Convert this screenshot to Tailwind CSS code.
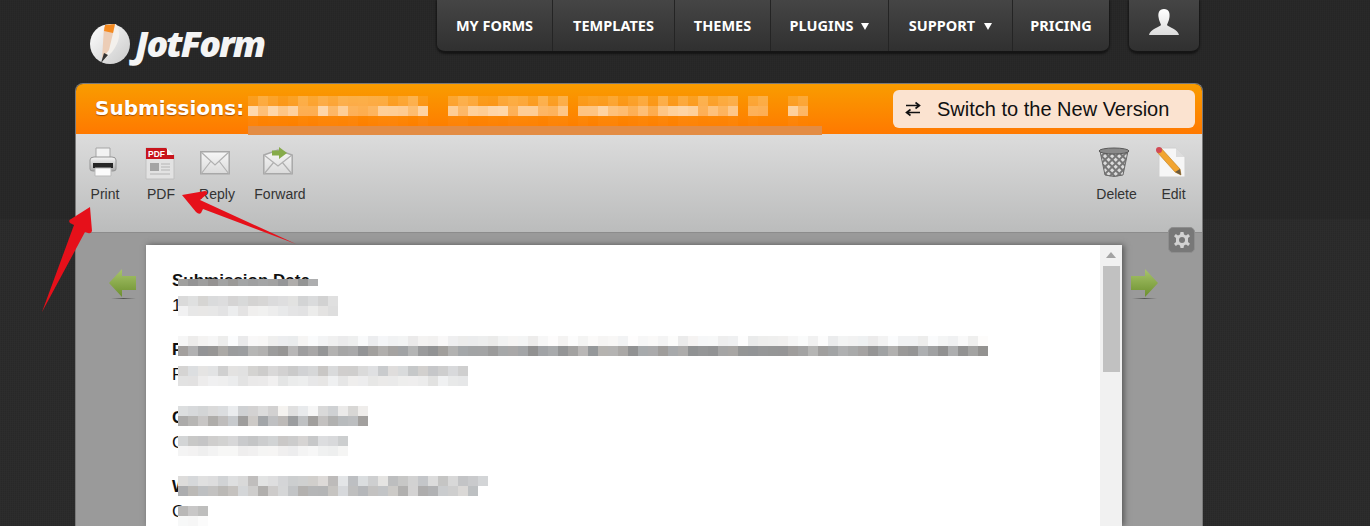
<!DOCTYPE html>
<html lang="en">
<head>
    <meta charset="UTF-8">
    <meta name="viewport" content="width=device-width, initial-scale=1.0">
    <title>JotForm Submissions</title>
    <script src="https://cdn.jsdelivr.net/npm/@tailwindcss/browser@4"></script>
</head>
<body class="relative h-[526px] w-[1370px] overflow-hidden bg-[image:repeating-linear-gradient(90deg,rgba(255,255,255,.012)_0_1px,transparent_1px_2px),repeating-linear-gradient(0deg,rgba(0,0,0,.06)_0_1px,transparent_1px_2px),linear-gradient(#272727_219px,#2b2b2b_219px)] font-['Liberation_Sans',Arial,sans-serif]">

    <!-- Top bar -->
    <header class="flex h-[83px] items-start">
        <div class="ml-[90px] mt-[24px] flex w-[347px] items-center">
            <svg class="h-[40px] w-[40px] shrink-0" viewBox="0 0 40 40">
                <defs>
                    <linearGradient id="ball" x1="0" y1="0" x2="1" y2="1"><stop offset="0" stop-color="#fff"/><stop offset="1" stop-color="#c9c9c9"/></linearGradient>
                </defs>
                <circle cx="20" cy="20" r="20" fill="url(#ball)"/>
                <path d="M14 2 L26 0 Q34 12 22 28 L13 37 Z" fill="#f3f0ec"/>
                <path d="M14 3 L25 1 L19 26 L12 35 Z" fill="#eccdb6"/>
                <path d="M15 1 L25 0 L23 9 L14 7 Z" fill="#f58a1f"/>
                <path d="M14 29 L18 31 L11 39 Z" fill="#333"/>
            </svg>
            <span class="ml-[5px] font-['Open_Sans',sans-serif] text-[36px] font-extrabold italic leading-none tracking-[-2px] text-[#f4f4f4]">JotForm</span>
        </div>
        <nav class="flex h-[53px] w-[672px] rounded-b-[8px] border-b-2 border-[#151515] bg-[linear-gradient(#454545,#303030)] font-['Noto_Sans',sans-serif] text-[14.500px] font-bold text-white shadow-[0_0_3px_#000]">
            <a class="flex w-[116px] items-center justify-center border-r border-[#242424]">MY FORMS</a>
            <a class="flex w-[122px] items-center justify-center border-r border-[#242424]">TEMPLATES</a>
            <a class="flex w-[96px] items-center justify-center border-r border-[#242424]">THEMES</a>
            <a class="flex w-[118px] items-center justify-center gap-[8px] border-r border-[#242424]">PLUGINS <span class="mt-[2px] h-0 w-0 border-x-[4px] border-t-[7px] border-x-transparent border-t-white"></span></a>
            <a class="flex w-[124px] items-center justify-center gap-[9px] border-r border-[#242424]">SUPPORT <span class="mt-[2px] h-0 w-0 border-x-[4px] border-t-[7px] border-x-transparent border-t-white"></span></a>
            <a class="flex flex-1 items-center justify-center">PRICING</a>
        </nav>
        <div class="ml-[20px] flex h-[53px] w-[70px] items-start justify-center rounded-b-[8px] border-b-2 border-[#151515] bg-[linear-gradient(#454545,#303030)] pt-[8px] shadow-[0_0_3px_#000]">
            <svg class="h-[28px] w-[32px]" viewBox="0 0 32 28">
                <defs>
                    <linearGradient id="usr" x1="0" y1="0" x2="0" y2="1"><stop offset="0" stop-color="#fff"/><stop offset="1" stop-color="#dcdcdc"/></linearGradient>
                </defs>
                <path d="M16 1 C11 1 10 5 10.500 9 C11 13 12.500 15 13 17 C12 19 2 21 1 27 L31 27 C30 21 20 19 19 17 C19.500 15 21 13 21.500 9 C22 5 21 1 16 1 Z" fill="url(#usr)"/>
            </svg>
        </div>
    </header>

    <!-- Submission panel -->
    <main class="ml-[75px] flex h-[443px] w-[1128px] flex-col rounded-t-[8px] border-x border-t border-[#7a7a7a]">
        <div class="relative flex h-[50px] shrink-0 items-center justify-between rounded-t-[7px] bg-[linear-gradient(#f99c00,#ff7900)] pl-[19px] pr-[7px]">
            <h1 class="mt-[-2px] font-['DejaVu_Sans',Verdana,sans-serif] text-[20px] font-bold text-white [text-shadow:0_1px_1px_#a85000]">Submissions:</h1>
            <button class="flex h-[38px] w-[302px] items-center rounded-[6px] bg-[#fbe3d0] pl-[12px] text-[20px] text-[#111]">
                <svg class="mr-[16px] h-[16px] w-[16px]" viewBox="0 0 16 16" fill="none" stroke="#111" stroke-width="1.600">
                    <path d="M1 4.500 H14 M10.500 1.500 L14.500 4.500 L10.500 7.500"/>
                    <path d="M15 11.500 H2 M5.500 8.500 L1.500 11.500 L5.500 14.500"/>
                </svg>
                Switch to the New Version
            </button>
            <div id="titleBlur" class="absolute left-[172px] top-[12px]"></div>
            <div class="absolute bottom-[-1px] left-[172px] h-[9px] w-[574px] bg-[#e38c44]"></div>
        </div>

        <!-- Toolbar -->
        <div class="flex h-[99px] shrink-0 justify-between border-b border-[#8c8c8c] bg-[linear-gradient(#dcdcdc,#bbbcbc)] pt-[13px] text-[14px] text-[#333]">
            <div class="flex pl-[1px]">
                <div class="flex w-[56px] flex-col items-center">
                    <svg class="mr-[5px] h-[30px] w-[30px]" viewBox="0 0 30 30">
                        <defs>
                            <linearGradient id="prn" x1="0" y1="0" x2="0" y2="1"><stop offset="0" stop-color="#f6f6f6"/><stop offset="1" stop-color="#a9a9a9"/></linearGradient>
                            <linearGradient id="env" x1="0" y1="0" x2="0" y2="1"><stop offset="0" stop-color="#f7f7f7"/><stop offset="1" stop-color="#dadada"/></linearGradient>
                        </defs>
                        <path d="M8 1 H22 V11 H8 Z" fill="#f2f2f2" stroke="#a5a5a5"/>
                        <path d="M2 13 Q2 10 6 10 H24 Q28 10 28 13 V22 Q28 24 25 24 H5 Q2 24 2 22 Z" fill="url(#prn)" stroke="#959595"/>
                        <path d="M5 16 H25 V21 H5 Z" fill="#262626"/>
                        <path d="M7 21 H23 V29 H7 Z" fill="#fbfbfb" stroke="#bbb"/>
                    </svg>
                    <span class="mt-[7px]">Print</span>
                </div>
                <div class="flex w-[56px] flex-col items-center">
                    <svg class="mr-[3px] h-[30px] w-[30px] overflow-visible" viewBox="0 0 30 30">
                        <path d="M1 1 H22 L29 8 V32 H1 Z" fill="#e2e2e2" stroke="#c0c0c0"/>
                        <path d="M1 1 H21 L26 6 L29 8 V12 H1 Z" fill="#c8141c"/>
                        <path d="M22 1 L29 8 H22 Z" fill="#f2f2f2"/>
                        <text x="3" y="10" font-size="8.500" font-weight="700" fill="#fff" font-family="Liberation Sans">PDF</text>
                        <rect x="5" y="16" width="9" height="8" fill="#a4a4a4"/>
                        <path d="M16 17 H25 M16 20 H25 M16 23 H25 M5 27 H25" stroke="#b4b4b4"/>
                    </svg>
                    <span class="mt-[7px]">PDF</span>
                </div>
                <div class="flex w-[56px] flex-col items-center">
                    <svg class="mr-[4px] h-[30px] w-[30px]" viewBox="0 0 30 30">
                        <path d="M.8 4.800 H29.200 V26.800 H.8 Z" fill="url(#env)" stroke="#a8a8a8" stroke-width="1.500"/>
                        <path d="M1 5 L15 18 L29 5 M1 27 L11 14 M29 27 L19 14" fill="none" stroke="#b0b0b0" stroke-width="1.200"/>
                    </svg>
                    <span class="mt-[7px]">Reply</span>
                </div>
                <div class="flex w-[70px] flex-col items-center">
                    <svg class="mr-[4px] h-[30px] w-[30px]" viewBox="0 0 30 30">
                        <path d="M.8 8 L15 3 L29.200 8 V26.800 H.8 Z" fill="url(#env)" stroke="#a8a8a8" stroke-width="1.500"/>
                        <path d="M1 8 L15 19 L29 8 M1 27 L11 15 M29 27 L19 15" fill="none" stroke="#b0b0b0" stroke-width="1.200"/>
                        <path d="M9 3.500 H16 V0 L24 6 L16 12 V8.500 H9 Z" fill="#86ab4a"/>
                    </svg>
                    <span class="mt-[7px]">Forward</span>
                </div>
            </div>
            <div class="flex">
                <div class="flex w-[57px] flex-col items-center">
                    <svg class="mr-[5px] h-[30px] w-[32px]" viewBox="0 0 32 30">
                        <defs>
                            <pattern id="mesh" width="5" height="5" patternUnits="userSpaceOnUse" patternTransform="rotate(45)"><rect width="5" height="5" fill="#777"/><rect width="3" height="3" fill="#dcdcdc"/></pattern>
                        </defs>
                        <path d="M2 4 L7 28 Q16 31 25 28 L30 4 Z" fill="url(#mesh)" stroke="#6a6a6a"/>
                        <ellipse cx="16" cy="4" rx="15" ry="3" fill="#8a8a8a" stroke="#5a5a5a"/>
                    </svg>
                    <span class="mt-[7px]">Delete</span>
                </div>
                <div class="flex w-[57px] flex-col items-center">
                    <svg class="mr-[6px] h-[30px] w-[30px]" viewBox="0 0 30 30">
                        <path d="M3 1 H20 L29 10 V30 H3 Z" fill="#f6f6f6" stroke="#cfcfcf"/>
                        <path d="M20 1 L29 10 H20 Z" fill="#dcdcdc"/>
                        <path d="M1 5 L5 1 L24 22 L25 28 L19 25 Z" fill="#f2a531" stroke="#b87a1c" stroke-width=".6"/>
                        <circle cx="3" cy="3" r="3" fill="#d24a55"/>
                        <path d="M19 25 L25 28 L24 22 Z" fill="#6b5a3e"/>
                    </svg>
                    <span class="mt-[7px]">Edit</span>
                </div>
            </div>
        </div>

        <!-- Submission view -->
        <div class="relative flex min-h-0 flex-1 items-start bg-[#9a9a9a] pt-[12px]">
            <div class="flex w-[70px] justify-end pr-[9px] pt-[23px]">
                <svg class="h-[31px] w-[29px]" viewBox="0 0 29 31">
                    <defs>
                        <linearGradient id="grn" x1="0" y1="0" x2="0" y2="1"><stop offset="0" stop-color="#a8c56b"/><stop offset="1" stop-color="#6c8f2e"/></linearGradient>
                        <linearGradient id="shade"><stop offset="0" stop-color="#555" stop-opacity="0"/><stop offset=".5" stop-color="#555"/><stop offset="1" stop-color="#555" stop-opacity="0"/></linearGradient>
                    </defs>
                    <path d="M1 15 L14 1 V8 H28 V22 H14 V29 Z" fill="url(#grn)"/>
                    <rect x="3" y="30" width="25" height="1" fill="url(#shade)"/>
                </svg>
            </div>
            <section class="relative flex h-[281px] w-[976px] overflow-hidden bg-white text-[17px] text-[#111] shadow-[2px_0_6px_#555]">
                <div class="flex-1 pl-[26px] pt-[23px] leading-[25px]">
                    <div class="mb-[18.500px]"><b>Submission Date</b><br>1</div>
                    <div class="mb-[18.500px]"><b>P</b><br>P</div>
                    <div class="mb-[18.500px]"><b>C</b><br>C</div>
                    <div><b>W</b><br>C</div>
                </div>
                <div id="fieldBlur"></div>
                <div class="flex w-[22px] flex-col items-center bg-[#f1f1f1]">
                    <span class="mt-[7px] h-0 w-0 border-x-[5px] border-b-[6px] border-x-transparent border-b-[#a3a3a3]"></span>
                    <span class="mt-[8px] h-[106px] w-[17px] bg-[#c1c1c1]"></span>
                </div>
            </section>
            <div class="pl-[8px] pt-[23px]">
                <svg class="h-[31px] w-[29px]" viewBox="0 0 29 31">
                    <path d="M28 15 L15 1 V8 H1 V22 H15 V29 Z" fill="url(#grn)"/>
                    <rect x="2" y="30" width="25" height="1" fill="url(#shade)"/>
                </svg>
            </div>
            <div class="absolute right-[7px] top-[-6px] flex h-[26px] w-[27px] items-center justify-center rounded-[5px] border border-[#8e8e8e] bg-[#787878]">
                <svg class="h-[18px] w-[18px]" viewBox="0 0 18 18">
                    <path d="M7.500 1 H10.500 L11 3.500 L13 4.400 L15.200 3 L17 5.300 L15 7 V11 L17 12.700 L15.200 15 L13 13.600 L11 14.500 L10.500 17 H7.500 L7 14.500 L5 13.600 L2.800 15 L1 12.700 L3 11 V7 L1 5.300 L2.800 3 L5 4.400 L7 3.500 Z" fill="#d2d2d2"/>
                    <circle cx="9" cy="9" r="3" fill="#787878"/>
                </svg>
            </div>
        </div>
    </main>

    <!-- Hand drawn annotation arrows -->
    <svg class="absolute left-0 top-0 h-[526px] w-[1370px]" viewBox="0 0 1370 526">
        <path d="M42 312 L74 225 L70 223 Q68 220 71 219 L90 207 L92 231 Q91 234 88 233 L85 232 Z" fill="#e6101a"/>
        <path d="M296 244 L200 200 L207 194 Q208 191 205 191 L182 195 L196 212 Q199 215 201 213 L203 209 Z" fill="#e6101a"/>
    </svg>

    <script>
        // blurred out bits of the page, drawn as 10px mosaics
        let seed = 7;
        function rnd() {
            seed = (seed * 9301 + 49297) % 233280;
            return seed / 233280;
        }

        function mosaic(parent, left, top, rows) {
            const box = document.createElement('div');
            box.className = 'absolute';
            box.style.left = left + 'px';
            box.style.top = top + 'px';
            rows.forEach(row => {
                const line = document.createElement('div');
                line.className = 'flex';
                line.style.height = (row.h || 10) + 'px';
                for (let i = 0; i < row.cols; i++) {
                    const cell = document.createElement('div');
                    cell.className = 'w-[10px] shrink-0';
                    const v = row.g + (rnd() - 0.5) * row.spread;
                    const tint = (row.spread / 8) * (rnd() - 0.5);
                    cell.style.background = `rgb(${Math.min(255, Math.round(v + tint))},${Math.min(255, Math.round(v))},${Math.min(255, Math.round(v - tint))})`;
                    line.appendChild(cell);
                }
                box.appendChild(line);
            });
            parent.appendChild(box);
        }

        // card starts at 146,245
        const card = document.getElementById('fieldBlur');
        const x0 = 178 - 146;
        mosaic(card, x0, 279 - 245, [{ cols: 14, g: 160, spread: 30, h: 7 }]);
        mosaic(card, x0, 296 - 245, [{ cols: 16, g: 220, spread: 22 }, { cols: 16, g: 232, spread: 20 }]);
        mosaic(card, x0, 336 - 245, [{ cols: 81, g: 244, spread: 20 }, { cols: 81, g: 165, spread: 40 }]);
        mosaic(card, x0, 366 - 245, [{ cols: 29, g: 214, spread: 30 }, { cols: 29, g: 233, spread: 16 }]);
        mosaic(card, x0, 406 - 245, [{ cols: 19, g: 228, spread: 44 }, { cols: 19, g: 178, spread: 50 }]);
        mosaic(card, x0, 436 - 245, [{ cols: 17, g: 208, spread: 28 }, { cols: 17, g: 243, spread: 12 }]);
        mosaic(card, x0, 476 - 245, [{ cols: 31, g: 208, spread: 44 }, { cols: 30, g: 195, spread: 46 }]);
        mosaic(card, x0, 506 - 245, [{ cols: 3, g: 192, spread: 20 }, { cols: 3, g: 248, spread: 8 }]);

        // title blur, orange tinted
        const title = document.getElementById('titleBlur');
        const gaps = [[18, 19], [32, 32], [49, 49], [52, 53]];
        const isGap = i => gaps.some(g => i >= g[0] && i <= g[1]);
        [[0.1, 0.25], [0.35, 0.42], [0, 0.04]].forEach(tint => {
            const line = document.createElement('div');
            line.className = 'flex h-[10px]';
            for (let i = 0; i < 56; i++) {
                const cell = document.createElement('div');
                cell.className = 'w-[10px] shrink-0';
                const a = isGap(i) ? 0 : tint[0] + rnd() * tint[1];
                cell.style.background = `rgba(255,240,225,${a})`;
                line.appendChild(cell);
            }
            title.appendChild(line);
        });
    </script>
</body>
</html>
